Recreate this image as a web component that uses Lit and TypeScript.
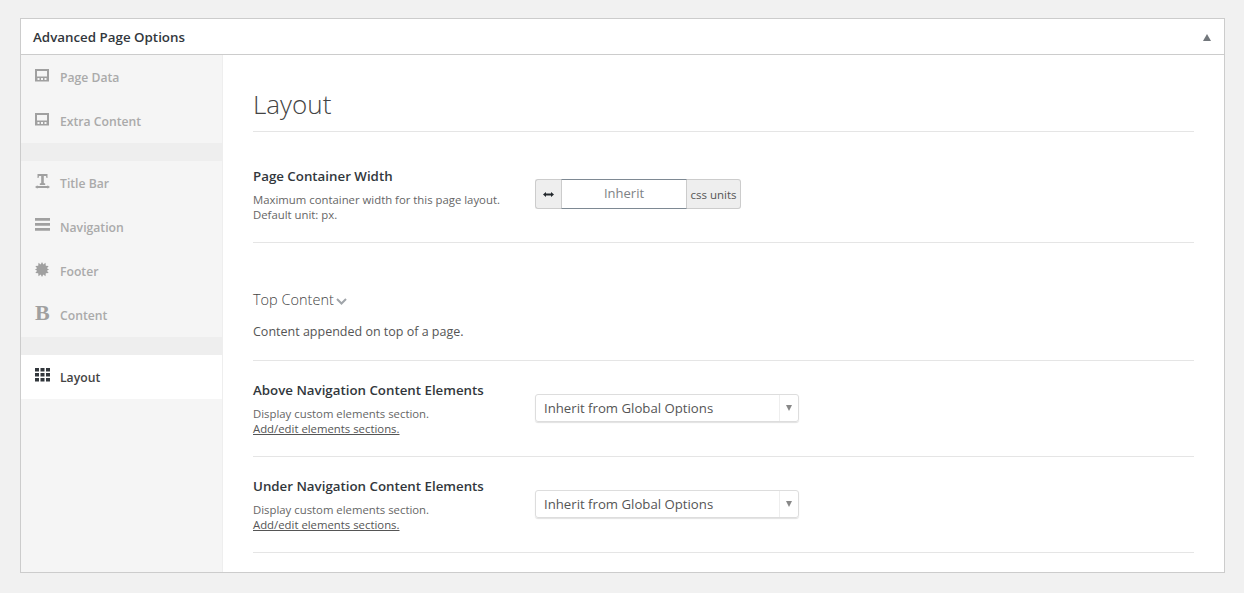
import { LitElement, html, css, svg } from "lit";
import { customElement } from "lit/decorators.js";
import { classMap } from "lit/directives/class-map.js";

type NavItem = { label: string; icon: unknown; active?: boolean };

const calc = svg`<path fill-rule="evenodd" d="M0 1h14v12.500H0zM2 3v5.500h10V3zM2.500 10v2h2v-2zM6 10v2h2v-2zM9.500 10v2h2v-2z"/>`;
const titleBar = svg`<path d="M2.500 0h10v4h-1L11 2H8.800v7l1.400.5V11H4.800V9.500L6.200 9V2H4L3.500 4h-1z"/><path d="M0 13 2.500 11.200V12h10v-.8L15 13l-2.500 1.800V14h-10v.8z"/>`;
const bars = svg`<path d="M0 0h15v2.800H0zM0 5h15v2.800H0zM0 10h15v2.800H0z"/>`;
const burst = svg`<path d="M7 0l1.300 2.600L10.500.8l.3 2.900 2.900.3-1.800 2.200L14 7.500l-2.100 1.300 1.800 2.200-2.900.3-.3 2.900-2.200-1.800L7 15l-1.300-2.600-2.200 1.800-.3-2.900-2.900-.3 1.800-2.200L0 7.500l2.100-1.300L.3 4l2.900-.3.3-2.900 2.200 1.800z"/>`;
const grid = svg`<path d="M0 0h4v3.500H0zM5.500 0h4v3.500h-4zM11 0h4v3.500h-4zM0 5h4v3.500H0zM5.500 5h4v3.500h-4zM11 5h4v3.500h-4zM0 10h4v3.500H0zM5.500 10h4v3.500h-4zM11 10h4v3.500h-4z"/>`;

const groups: NavItem[][] = [
  [
    { label: "Page Data", icon: calc },
    { label: "Extra Content", icon: calc },
  ],
  [
    { label: "Title Bar", icon: titleBar },
    { label: "Navigation", icon: bars },
    { label: "Footer", icon: burst },
    { label: "Content", icon: null },
  ],
  [{ label: "Layout", icon: grid, active: true }],
];

@customElement("app-root")
export class AppRoot extends LitElement {
  static override styles = css`
    :host {
      display: block;
      height: 593px;
      box-sizing: border-box;
      padding: 18px 19px 20px 20px;
      background: #f1f1f1;
      font-family: "Open Sans", "Noto Sans", sans-serif;
      color: #444;
      overflow: hidden;
    }

    .panel {
      height: 555px;
      box-sizing: border-box;
      background: #fff;
      border: 1px solid #ccc;
      display: flex;
      flex-direction: column;
    }

    .head {
      height: 36px;
      flex: none;
      box-sizing: border-box;
      border-bottom: 1px solid #ccc;
      display: flex;
      align-items: center;
      justify-content: space-between;
      padding: 0 13px 0 12px;
      font-size: 13.350px;
      font-weight: 600;
      color: #32373c;
    }

    .caret-up {
      width: 0;
      height: 0;
      border-left: 4.500px solid transparent;
      border-right: 4.500px solid transparent;
      border-bottom: 7px solid #72777c;
      margin-top: 2px;
    }

    .body {
      flex: 1;
      display: flex;
      min-height: 0;
    }

    .side {
      width: 202px;
      box-sizing: border-box;
      flex: none;
      background: #f5f5f5;
      border-right: 1px solid #eee;
    }

    .groups {
      background: #eee;
      width: 201px;
    }

    .group {
      background: #f5f5f5;
    }

    .group + .group {
      margin-top: 18px;
    }

    .item {
      height: 44px;
      display: flex;
      align-items: center;
      padding-left: 14px;
      font-size: 12.200px;
      font-weight: 600;
      color: #aaa;
    }

    .item.active {
      background: #fff;
      color: #444;
    }

    .item svg {
      width: 15px;
      height: 15px;
      fill: #a0a0a0;
      margin-right: 10px;
      margin-top: -3px;
      overflow: visible;
    }

    .item.active svg {
      fill: #32373c;
    }

    .bold-b {
      width: 15px;
      margin-right: 10px;
      margin-top: -4px;
      font-family: "Liberation Serif", serif;
      font-size: 22px;
      line-height: 20px;
      font-weight: 700;
      color: #a0a0a0;
    }

    .main {
      flex: 1;
      padding: 0 30px;
      min-width: 0;
    }

    h1 {
      margin: 0;
      height: 77px;
      box-sizing: border-box;
      padding-top: 29px;
      font-size: 26px;
      line-height: 40px;
      font-weight: 300;
      color: #444;
      border-bottom: 1px solid #e5e5e5;
    }

    .row {
      display: flex;
      border-bottom: 1px solid #e5e5e5;
    }

    .row .info {
      width: 282px;
      flex: none;
    }

    .label {
      font-size: 13.300px;
      line-height: 20px;
      font-weight: 600;
      color: #32373c;
    }

    .desc {
      font-size: 11.350px;
      line-height: 15px;
      color: #666;
      margin-top: 6px;
    }

    .desc a {
      color: #555;
      text-decoration: underline;
      display: block;
    }

    .row-width {
      height: 111px;
      box-sizing: border-box;
      padding-top: 34px;
    }

    .units {
      display: flex;
      height: 30px;
      margin-top: 13px;
      font-size: 11.500px;
      color: #555;
    }

    .units .addon {
      background: #eee;
      border: 1px solid #ccc;
      display: flex;
      align-items: center;
      justify-content: center;
      box-sizing: border-box;
    }

    .units .arrows {
      width: 26px;
      border-right: 0;
      border-radius: 3px 0 0 3px;
    }

    .units .arrows svg {
      width: 11px;
      height: 7px;
      fill: #23282d;
    }

    .units .value {
      width: 126px;
      box-sizing: border-box;
      border: 1px solid #7e8993;
      border-left-color: #ccc;
      border-right-color: #ccc;
      font-size: 13px;
      line-height: 26px;
      text-align: center;
      color: #7e8285;
    }

    .units .suffix {
      width: 54px;
      border-left: 0;
      border-radius: 0 3px 3px 0;
      padding-top: 1px;
    }

    .section {
      height: 118px;
      box-sizing: border-box;
      padding-top: 47px;
      border-bottom: 1px solid #e5e5e5;
    }

    .section-title {
      display: flex;
      align-items: center;
      font-size: 14.500px;
      line-height: 20px;
      font-weight: 300;
      color: #444;
    }

    .section-title svg {
      width: 11px;
      height: 7px;
      margin-left: 2px;
      margin-top: 3px;
      fill: none;
      stroke: #a0a5aa;
      stroke-width: 2;
    }

    .section p {
      margin: 12px 0 0;
      font-size: 12.500px;
      line-height: 20px;
      color: #555;
    }

    .row-select {
      height: 96px;
      box-sizing: border-box;
      padding-top: 19px;
    }

    .select {
      width: 264px;
      height: 28px;
      margin-top: 14px;
      box-sizing: border-box;
      border: 1px solid #ddd;
      border-radius: 3px;
      box-shadow: 0 1px 1px rgba(0, 0, 0, 0.12);
      display: flex;
      align-items: center;
      font-size: 13.200px;
      color: #555;
    }

    .select .text {
      flex: 1;
      padding-left: 8px;
    }

    .select .drop {
      width: 18px;
      height: 26px;
      border-left: 1px solid #eee;
      display: flex;
      align-items: center;
      justify-content: center;
    }

    .select .drop i {
      width: 0;
      height: 0;
      border-left: 3px solid transparent;
      border-right: 3px solid transparent;
      border-top: 6px solid #888;
    }
  `;

  private renderItem(item: NavItem) {
    return html`
      <div class=${classMap({ item: true, active: !!item.active })}>
        ${item.icon
          ? html`<svg viewBox="0 0 15 15" aria-hidden="true">${item.icon}</svg>`
          : html`<span class="bold-b">B</span>`}
        ${item.label}
      </div>
    `;
  }

  private renderSelectRow(title: string) {
    return html`
      <div class="row row-select">
        <div class="info">
          <div class="label">${title}</div>
          <div class="desc">
            Display custom elements section.
            <a href="#">Add/edit elements sections.</a>
          </div>
        </div>
        <div class="select">
          <span class="text">Inherit from Global Options</span>
          <span class="drop"><i></i></span>
        </div>
      </div>
    `;
  }

  override render() {
    return html`
      <div class="panel">
        <div class="head">
          <span>Advanced Page Options</span>
          <span class="caret-up"></span>
        </div>
        <div class="body">
          <div class="side">
            <div class="groups">
              ${groups.map(
                (g) => html`<div class="group">${g.map((i) => this.renderItem(i))}</div>`,
              )}
            </div>
          </div>
          <div class="main">
            <h1>Layout</h1>
            <div class="row row-width">
              <div class="info">
                <div class="label">Page Container Width</div>
                <div class="desc">
                  Maximum container width for this page layout.<br />Default unit: px.
                </div>
              </div>
              <div class="units">
                <span class="addon arrows">
                  <svg viewBox="0 0 11 7"><path d="M0 3.500 3 1v1.500h5V1l3 2.500L8 6V4.500H3V6z" /></svg>
                </span>
                <span class="value">Inherit</span>
                <span class="addon suffix">css units</span>
              </div>
            </div>
            <div class="section">
              <div class="section-title">
                Top Content
                <svg viewBox="0 0 11 7"><path d="M1 1l4.500 4.500L10 1" /></svg>
              </div>
              <p>Content appended on top of a page.</p>
            </div>
            ${this.renderSelectRow("Above Navigation Content Elements")}
            ${this.renderSelectRow("Under Navigation Content Elements")}
          </div>
        </div>
      </div>
    `;
  }
}

declare global {
  interface HTMLElementTagNameMap {
    "app-root": AppRoot;
  }
}
